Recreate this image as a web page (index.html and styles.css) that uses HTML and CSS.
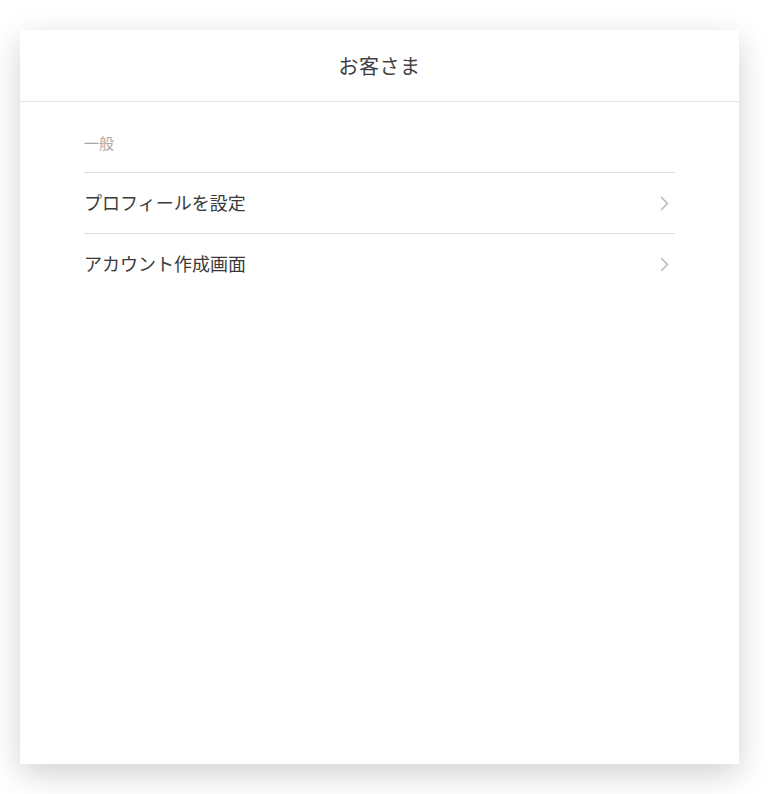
FILE: index.html
```html
<!DOCTYPE html>
<html lang="ja">
  <head>
    <meta charset="utf-8">
    <title>お客さま</title>
    <link rel="stylesheet" href="styles.css">
  </head>
  <body>
    <div class="panel">
      <header class="panel-header">
        <h1 class="title">お客さま</h1>
      </header>

      <div class="panel-body">
        <div class="section-label">一般</div>
        <ul class="menu">
          <li class="menu-item">
            <span>プロフィールを設定</span>
            <svg class="chevron" width="9" height="15" viewBox="0 0 9 15"><path d="M1.5 1.5 L7.5 7.5 L1.5 13.5" fill="none" stroke="#b8b8b8" stroke-width="1.5" stroke-linecap="round" stroke-linejoin="round"/></svg>
          </li>
          <li class="menu-item">
            <span>アカウント作成画面</span>
            <svg class="chevron" width="9" height="15" viewBox="0 0 9 15"><path d="M1.5 1.5 L7.5 7.5 L1.5 13.5" fill="none" stroke="#b8b8b8" stroke-width="1.5" stroke-linecap="round" stroke-linejoin="round"/></svg>
          </li>
        </ul>
      </div>
    </div>
  </body>
</html>
```

FILE: styles.css
```css
:root {
  --text-primary: #3a3a3a;
  --text-muted: #a8a8a8;
  --divider: #dedede;
  --card-bg: #FFFFFF;
}

body {
  margin: 0;
  padding: 30px 40px 30px 20px;
  background: #FFFFFF;
  font-family: 'Noto Sans CJK JP', 'Noto Sans', sans-serif;
  color: var(--text-primary);
}

.panel {
  height: 734px;
  background: var(--card-bg);
  box-shadow: 0 10px 30px rgba(0, 0, 0, 0.18);
  display: flex;
  flex-direction: column;
}

.panel-header {
  height: 71px;
  border-bottom: 1px solid #e6e6e6;
  display: flex;
  align-items: center;
  justify-content: center;
}

.title {
  margin: 0;
  font-size: 20px;
  font-weight: 400;
  color: #404040;
  letter-spacing: 0.5px;
}

.panel-body {
  padding: 31px 64px 0;
}

.section-label {
  font-size: 15px;
  line-height: 20px;
  color: var(--text-muted);
  margin-bottom: 19px;
}

.menu {
  list-style: none;
  margin: 0;
  padding: 0;
  border-top: 1px solid var(--divider);
}

.menu-item {
  height: 60px;
  display: flex;
  align-items: center;
  justify-content: space-between;
  padding-right: 6px;
  font-size: 18px;
  line-height: 24px;
  color: var(--text-primary);
}

.menu-item span {
  margin-top: -2px;
}

.menu-item + .menu-item {
  border-top: 1px solid var(--divider);
}

.chevron {
  display: block;
}
```
